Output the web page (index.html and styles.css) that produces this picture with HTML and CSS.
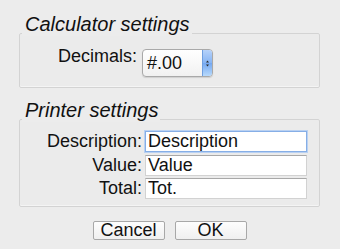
FILE: index.html
```html
<!DOCTYPE html>
<html lang="en">
<head>
    <meta charset="UTF-8">
    <meta name="viewport" content="width=device-width, initial-scale=1.0">
    <title>Settings</title>
    <link rel="stylesheet" href="styles.css">
</head>
<body>

<div class="group">
    <div class="group-head"><span class="group-title">Calculator settings</span></div>
    <div class="group-box calc-box">
        <label class="field-label" for="decimals">Decimals:</label>
        <div class="popup" id="decimals">
            <span class="popup-value">#.00</span>
            <span class="popup-arrows">
                <svg width="5" height="9" viewBox="0 0 5 9">
                    <path d="M2.5 1.5 L4 3.5 L1 3.5 Z" fill="#2a2a2a"/>
                    <path d="M2.5 7.5 L4 5.5 L1 5.5 Z" fill="#2a2a2a"/>
                </svg>
            </span>
        </div>
    </div>
</div>

<div class="group group-next">
    <div class="group-head"><span class="group-title">Printer settings</span></div>
    <div class="group-box printer-box">
        <label class="field-label" for="description">Description:</label>
        <input type="text" id="description" class="text-field focused" value="Description">

        <label class="field-label" for="value">Value:</label>
        <input type="text" id="value" class="text-field" value="Value">

        <label class="field-label" for="total">Total:</label>
        <input type="text" id="total" class="text-field" value="Tot.">
    </div>
</div>

<div class="buttons">
    <button>Cancel</button>
    <button>OK</button>
</div>

</body>
</html>
```

FILE: styles.css
```css
body {
    font-family: 'Liberation Sans', Arial, sans-serif;
    font-size: 18px;
    color: #111;
    background-color: #ececec;
    margin: 0;
    padding: 13px 20px 0 19px;
}

.group-next {
    margin-top: 11px;
}

.group-head {
    font-style: italic;
    font-size: 20px;
    line-height: 23px;
    height: 23px;
    margin-bottom: -3px;
    padding-left: 3px;
}

.group-title {
    display: inline-block;
    background-color: #ececec;
    padding: 0 2px 0 3px;
}

.group-box {
    border: 1px solid #d3d3d3;
    border-radius: 2px;
    background-color: #ebebeb;
    box-shadow: inset 0 -1px 0 #f4f4f4;
}

.field-label {
    line-height: 21px;
    text-align: right;
}

/* calculator box */
.calc-box {
    display: flex;
    padding: 12px 0 10px;
}

.calc-box .field-label {
    width: 117px;
    margin-right: 5px;
}

.popup {
    margin-top: 3px;
    width: 71px;
    height: 28px;
    box-sizing: border-box;
    display: flex;
    border: 1px solid #a9a9a9;
    border-radius: 4px;
    background: linear-gradient(#ffffff, #f1f1f1);
    box-shadow: 0 1px 1px rgba(0, 0, 0, 0.12);
    overflow: hidden;
}

.popup-value {
    flex: 1;
    line-height: 26px;
    padding-left: 4px;
}

.popup-arrows {
    width: 9px;
    display: flex;
    align-items: center;
    justify-content: center;
    border-left: 1px solid #6f9fe0;
    background: linear-gradient(#b6d2fa, #86b4f3 50%, #73a7f1 50%, #b7d9fb);
}

/* printer box */
.printer-box {
    display: grid;
    grid-template-columns: 1fr 162px;
    column-gap: 3px;
    row-gap: 2.5px;
    align-items: center;
    padding: 11px 12px 7px 0;
}

.text-field {
    height: 21px;
    box-sizing: border-box;
    margin: 0;
    padding: 0 2px;
    font-family: inherit;
    font-size: 18px;
    color: #111;
    background-color: #fff;
    border: 1px solid #d2d2d2;
    border-top-color: #a8a8a8;
    outline: none;
}

.text-field.focused {
    border: 1px solid #86aee6;
    box-shadow: 0 0 0 1px #b9d1f2;
}

/* dialog buttons */
.buttons {
    display: flex;
    justify-content: center;
    gap: 10px;
    margin-top: 14px;
}

button {
    width: 72px;
    height: 19px;
    padding: 0;
    font-family: inherit;
    font-size: 18px;
    line-height: 17px;
    color: #111;
    background: linear-gradient(#fdfdfd, #f0f0f0);
    border: 1px solid #a8a8a8;
    border-radius: 2px;
}
```
